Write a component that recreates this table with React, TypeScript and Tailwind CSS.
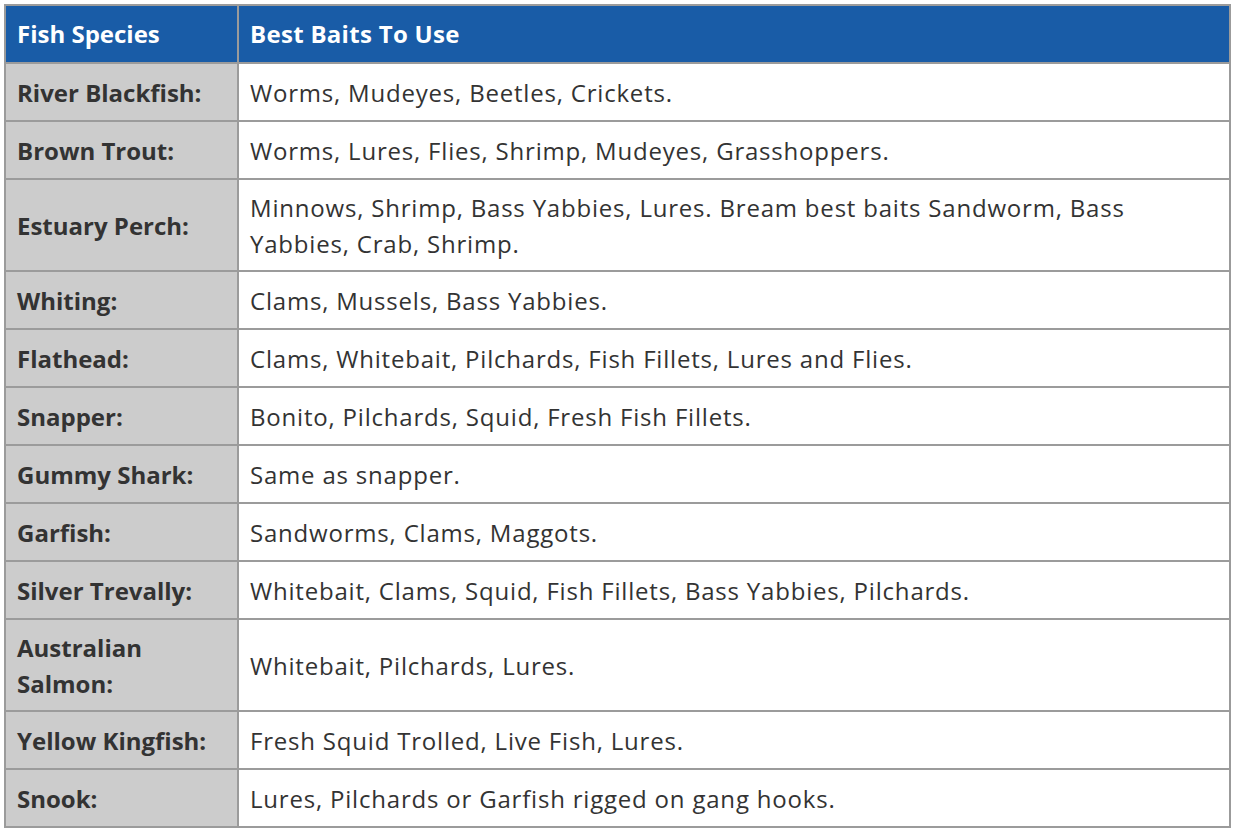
import React from "react";

const rows: [string, string, boolean?][] = [
  ["River Blackfish:", "Worms, Mudeyes, Beetles, Crickets."],
  ["Brown Trout:", "Worms, Lures, Flies, Shrimp, Mudeyes, Grasshoppers."],
  ["Estuary Perch:", "Minnows, Shrimp, Bass Yabbies, Lures. Bream best baits Sandworm, Bass Yabbies, Crab, Shrimp.", true],
  ["Whiting:", "Clams, Mussels, Bass Yabbies."],
  ["Flathead:", "Clams, Whitebait, Pilchards, Fish Fillets, Lures and Flies."],
  ["Snapper:", "Bonito, Pilchards, Squid, Fresh Fish Fillets."],
  ["Gummy Shark:", "Same as snapper."],
  ["Garfish:", "Sandworms, Clams, Maggots."],
  ["Silver Trevally:", "Whitebait, Clams, Squid, Fish Fillets, Bass Yabbies, Pilchards."],
  ["Australian Salmon:", "Whitebait, Pilchards, Lures.", true],
  ["Yellow Kingfish:", "Fresh Squid Trolled, Live Fish, Lures."],
  ["Snook:", "Lures, Pilchards or Garfish rigged on gang hooks."],
];

export default function App() {
  return (
    <div className="w-[1236px] h-[835px] bg-white pt-[4px] pl-[4px]" style={{ fontFamily: "'Open Sans', sans-serif" }}>
      <div className="w-[1227px] border-2 border-[#9b9b9b] text-[24px] leading-[36px] text-[#333333]">
        <div className="flex h-[56px] bg-[#195ca7] text-white font-bold">
          <div className="w-[233px] border-r-2 border-[#9b9b9b] flex items-center pl-[11px]">Fish Species</div>
          <div className="flex-1 flex items-center pl-[11px] tracking-[0.3px]">Best Baits To Use</div>
        </div>
        {rows.map(([a, b, tall]) => (
          <div key={a} className={`flex border-t-2 border-[#9b9b9b] ${tall ? "h-[92px]" : "h-[58px]"}`}>
            <div className="w-[233px] bg-[#cccccc] border-r-2 border-[#9b9b9b] flex items-center pl-[11px] pr-[20px] pt-[1px] font-bold">{a}</div>
            <div className="flex-1 bg-white flex items-center pl-[11px] pr-[10px] pt-[1px] tracking-[0.8px]">{b}</div>
          </div>
        ))}
      </div>
    </div>
  );
}
